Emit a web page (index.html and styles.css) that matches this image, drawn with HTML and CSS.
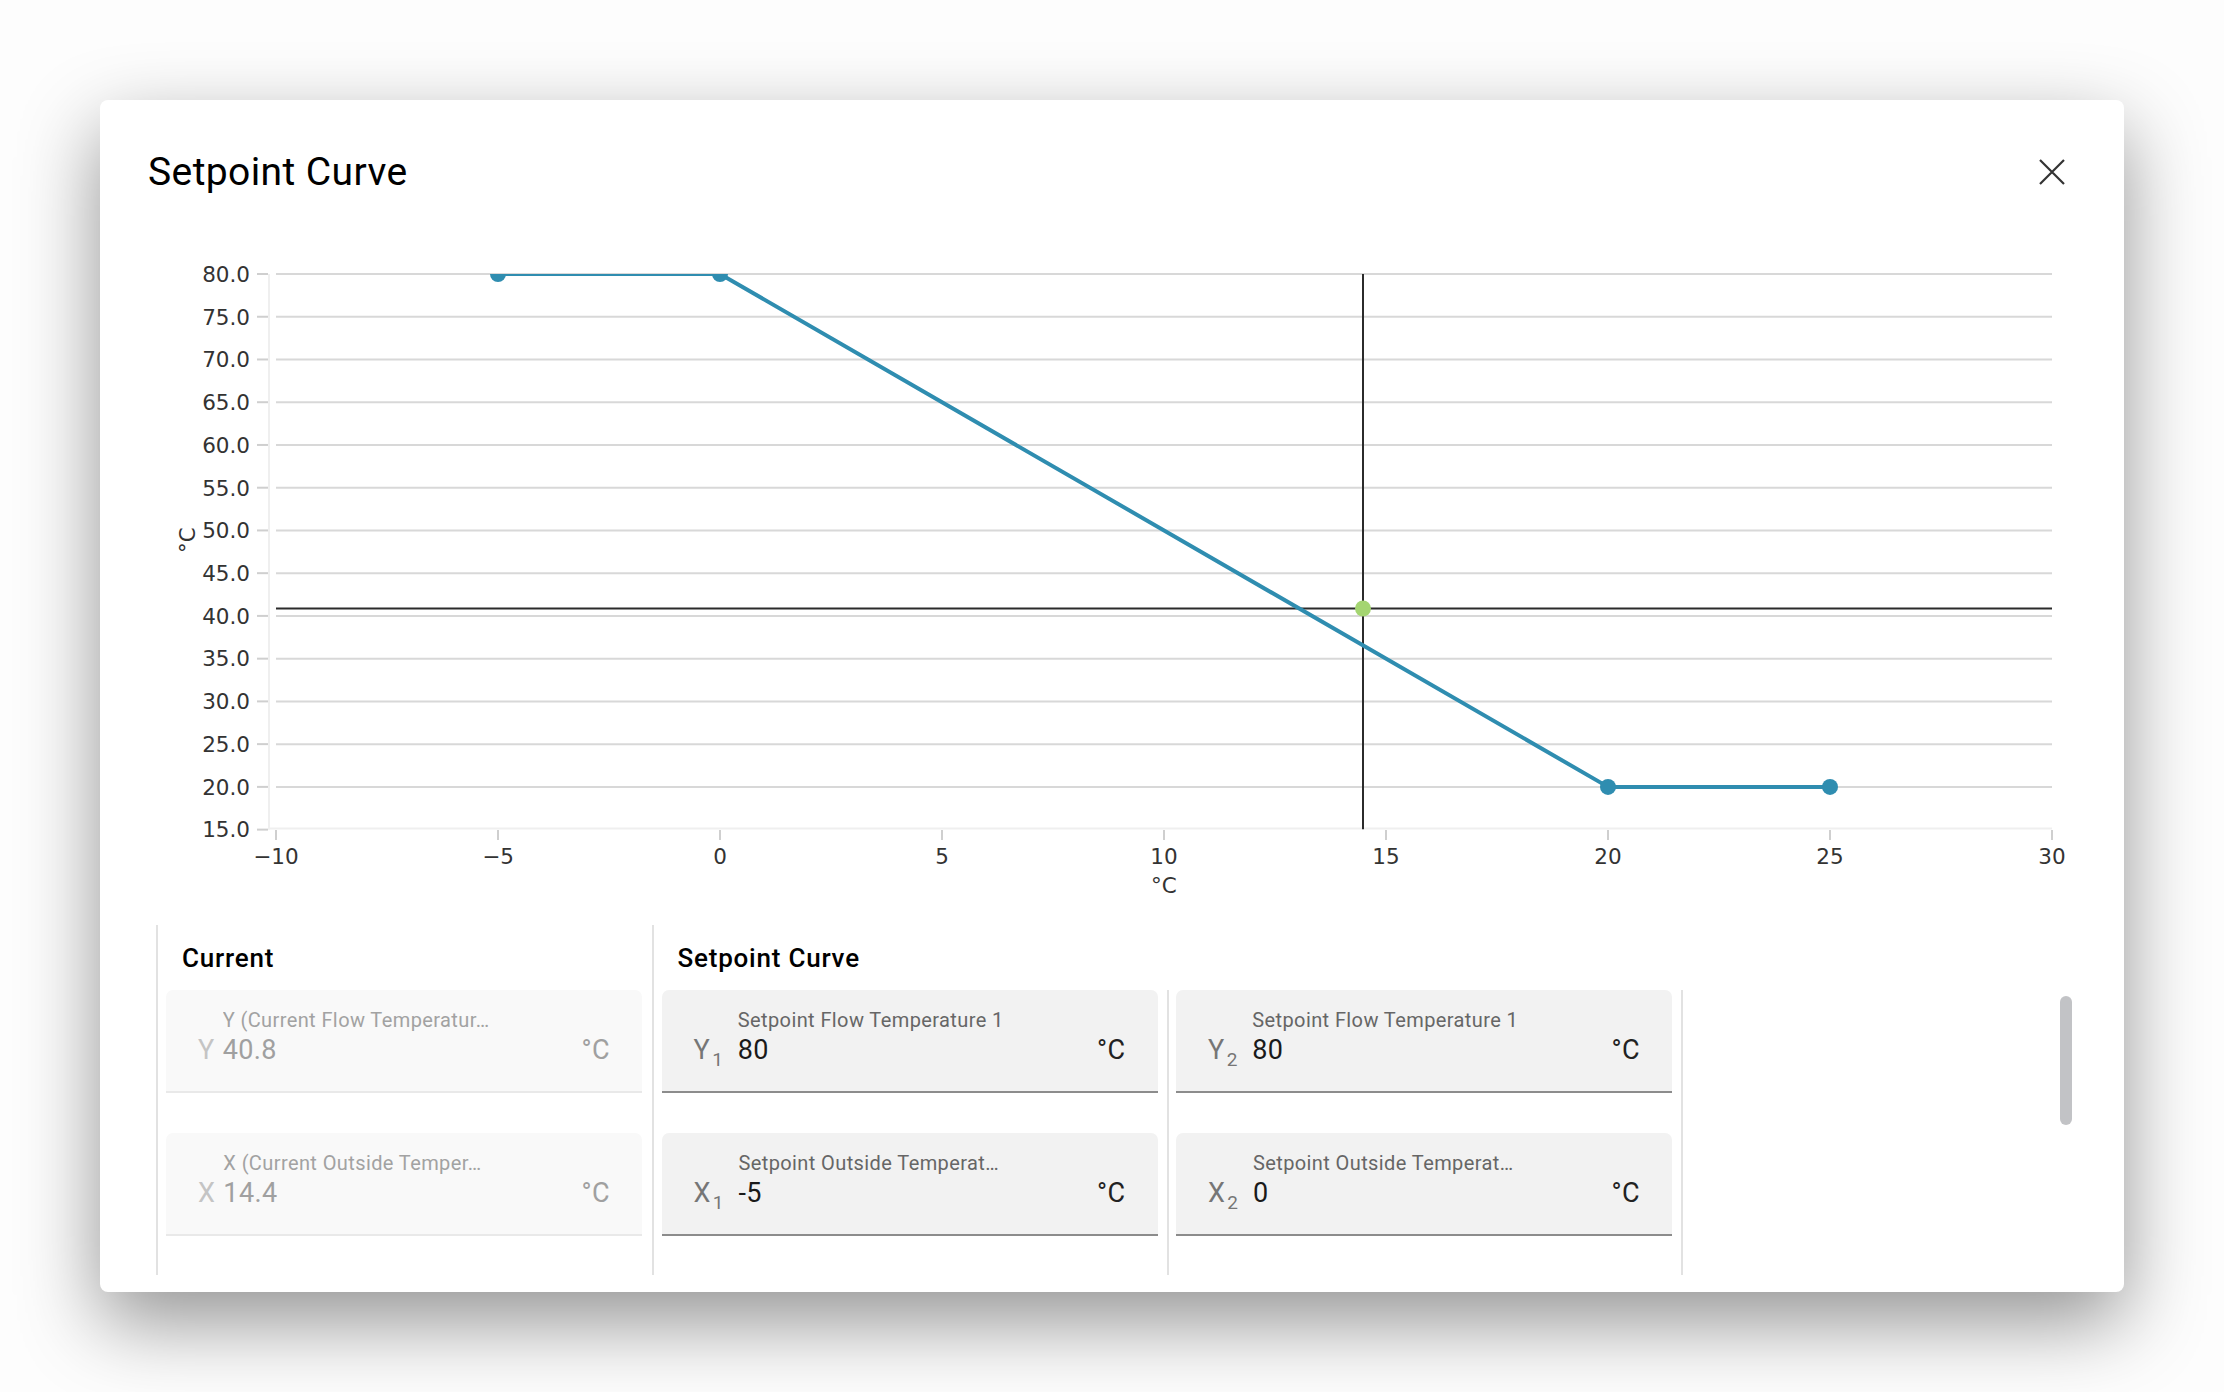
FILE: index.html
```html
<!DOCTYPE html>
<html lang="en">
<head>
<meta charset="utf-8">
<title>Setpoint Curve</title>
<link rel="stylesheet" href="styles.css">
</head>
<body>
<div class="dialog" role="dialog" aria-labelledby="dlg-title">
  <header class="dialog-header">
    <h2 class="dialog-title" id="dlg-title">Setpoint Curve</h2>
    <span class="close-btn" aria-label="Close">
      <svg viewBox="0 0 26 26" width="26" height="26"><path d="M1 1 L25 25 M25 1 L1 25" class="close-icon"/></svg>
    </span>
  </header>

  <svg class="chart" width="1928" height="660" viewBox="0 0 1928 660">
    <defs>
      <clipPath id="plot-area"><rect x="128" y="34" width="1776" height="555.6"/></clipPath>
    </defs>

    <!-- horizontal grid -->
    <g class="grid">
      <line x1="128" x2="1904" y1="34" y2="34"/>
      <line x1="128" x2="1904" y1="76.74" y2="76.74"/>
      <line x1="128" x2="1904" y1="119.48" y2="119.48"/>
      <line x1="128" x2="1904" y1="162.22" y2="162.22"/>
      <line x1="128" x2="1904" y1="204.96" y2="204.96"/>
      <line x1="128" x2="1904" y1="247.7" y2="247.7"/>
      <line x1="128" x2="1904" y1="290.44" y2="290.44"/>
      <line x1="128" x2="1904" y1="333.18" y2="333.18"/>
      <line x1="128" x2="1904" y1="375.92" y2="375.92"/>
      <line x1="128" x2="1904" y1="418.66" y2="418.66"/>
      <line x1="128" x2="1904" y1="461.4" y2="461.4"/>
      <line x1="128" x2="1904" y1="504.14" y2="504.14"/>
      <line x1="128" x2="1904" y1="546.88" y2="546.88"/>
    </g>

    <!-- axes -->
    <g class="axis-line">
      <line x1="121" x2="121" y1="34" y2="589.6"/>
      <line x1="120" x2="1904" y1="588.6" y2="588.6"/>
    </g>

    <!-- y axis -->
    <g class="ticks">
      <line x1="109" x2="120" y1="34" y2="34"/>
      <line x1="109" x2="120" y1="76.74" y2="76.74"/>
      <line x1="109" x2="120" y1="119.48" y2="119.48"/>
      <line x1="109" x2="120" y1="162.22" y2="162.22"/>
      <line x1="109" x2="120" y1="204.96" y2="204.96"/>
      <line x1="109" x2="120" y1="247.7" y2="247.7"/>
      <line x1="109" x2="120" y1="290.44" y2="290.44"/>
      <line x1="109" x2="120" y1="333.18" y2="333.18"/>
      <line x1="109" x2="120" y1="375.92" y2="375.92"/>
      <line x1="109" x2="120" y1="418.66" y2="418.66"/>
      <line x1="109" x2="120" y1="461.4" y2="461.4"/>
      <line x1="109" x2="120" y1="504.14" y2="504.14"/>
      <line x1="109" x2="120" y1="546.88" y2="546.88"/>
      <line x1="109" x2="120" y1="589.62" y2="589.62"/>
    </g>
    <g class="tick-label y-labels">
      <text x="102" y="41.8">80.0</text>
      <text x="102" y="84.54">75.0</text>
      <text x="102" y="127.28">70.0</text>
      <text x="102" y="170.02">65.0</text>
      <text x="102" y="212.76">60.0</text>
      <text x="102" y="255.5">55.0</text>
      <text x="102" y="298.24">50.0</text>
      <text x="102" y="340.98">45.0</text>
      <text x="102" y="383.72">40.0</text>
      <text x="102" y="426.46">35.0</text>
      <text x="102" y="469.2">30.0</text>
      <text x="102" y="511.94">25.0</text>
      <text x="102" y="554.68">20.0</text>
      <text x="102" y="597.42">15.0</text>
    </g>
    <text class="tick-label unit" transform="translate(47 300) rotate(-90)">°C</text>

    <!-- x axis -->
    <g class="ticks">
      <line x1="128" x2="128" y1="590" y2="600"/>
      <line x1="350" x2="350" y1="590" y2="600"/>
      <line x1="572" x2="572" y1="590" y2="600"/>
      <line x1="794" x2="794" y1="590" y2="600"/>
      <line x1="1016" x2="1016" y1="590" y2="600"/>
      <line x1="1238" x2="1238" y1="590" y2="600"/>
      <line x1="1460" x2="1460" y1="590" y2="600"/>
      <line x1="1682" x2="1682" y1="590" y2="600"/>
      <line x1="1904" x2="1904" y1="590" y2="600"/>
    </g>
    <g class="tick-label x-labels">
      <text x="128" y="624">−10</text>
      <text x="350" y="624">−5</text>
      <text x="572" y="624">0</text>
      <text x="794" y="624">5</text>
      <text x="1016" y="624">10</text>
      <text x="1238" y="624">15</text>
      <text x="1460" y="624">20</text>
      <text x="1682" y="624">25</text>
      <text x="1904" y="624">30</text>
    </g>
    <text class="tick-label x-labels" x="1016" y="653">°C</text>

    <g clip-path="url(#plot-area)">
      <!-- current operating point crosshair -->
      <line class="crosshair" x1="128" x2="1904" y1="368.5" y2="368.5"/>
      <line class="crosshair" x1="1215" x2="1215" y1="34" y2="589.6"/>

      <!-- setpoint curve -->
      <polyline class="curve" points="350,34 572,34 1460,546.88 1682,546.88"/>
      <circle class="curve-point" cx="350" cy="34" r="8"/>
      <circle class="curve-point" cx="572" cy="34" r="8"/>
      <circle class="curve-point" cx="1460" cy="546.88" r="8"/>
      <circle class="curve-point" cx="1682" cy="546.88" r="8"/>

      <circle class="current-point" cx="1215" cy="368.5" r="8"/>
    </g>
  </svg>

  <section class="params">
    <div class="col col-current">
      <h3 class="col-title">Current</h3>
      <div class="field-stack">
        <div class="field field-disabled">
          <span class="prefix">Y</span>
          <div class="field-body">
            <span class="field-label">Y (Current Flow Temperatur…</span>
            <span class="field-value">40.8</span>
          </div>
          <span class="suffix">°C</span>
        </div>
        <div class="field field-disabled">
          <span class="prefix">X</span>
          <div class="field-body">
            <span class="field-label">X (Current Outside Temper…</span>
            <span class="field-value">14.4</span>
          </div>
          <span class="suffix">°C</span>
        </div>
      </div>
    </div>

    <div class="group">
      <h3 class="col-title">Setpoint Curve</h3>
      <div class="group-cols">
        <div class="sub-col field-stack">
          <div class="field">
            <span class="prefix">Y<sub>1</sub></span>
            <div class="field-body">
              <span class="field-label">Setpoint Flow Temperature 1</span>
              <span class="field-value">80</span>
            </div>
            <span class="suffix">°C</span>
          </div>
          <div class="field">
            <span class="prefix">X<sub>1</sub></span>
            <div class="field-body">
              <span class="field-label">Setpoint Outside Temperat…</span>
              <span class="field-value">-5</span>
            </div>
            <span class="suffix">°C</span>
          </div>
        </div>
        <div class="sub-col field-stack">
          <div class="field">
            <span class="prefix">Y<sub>2</sub></span>
            <div class="field-body">
              <span class="field-label">Setpoint Flow Temperature 1</span>
              <span class="field-value">80</span>
            </div>
            <span class="suffix">°C</span>
          </div>
          <div class="field">
            <span class="prefix">X<sub>2</sub></span>
            <div class="field-body">
              <span class="field-label">Setpoint Outside Temperat…</span>
              <span class="field-value">0</span>
            </div>
            <span class="suffix">°C</span>
          </div>
        </div>
      </div>
    </div>
  </section>

  <div class="scroll-thumb"></div>
</div>
</body>
</html>
```

FILE: styles.css
```css
html, body {
  margin: 0;
}

body {
  padding: 100px;
  background: #fdfdfd;
  font-family: Roboto, "Noto Sans", sans-serif;
  letter-spacing: 0.025em;
  color: #000;
}

/* dialog shell */
.dialog {
  position: relative;
  height: 1192px;
  box-sizing: border-box;
  padding: 48px 48px 0;
  background: #fff;
  border-radius: 8px;
  box-shadow: 0 30px 80px rgba(0, 0, 0, 0.42);
}

.dialog-header {
  display: flex;
  align-items: center;
  justify-content: space-between;
  height: 48px;
}

.dialog-title {
  margin: 0;
  font-size: 39px;
  font-weight: 400;
  line-height: 42px;
}

.close-btn {
  width: 48px;
  height: 48px;
  display: flex;
  align-items: center;
  justify-content: center;
}

.close-icon {
  fill: none;
  stroke: #333;
  stroke-width: 2.2;
}

/* chart */
.chart {
  display: block;
  margin-top: 44px;
  letter-spacing: 0;
}

.grid line {
  stroke: #d8d8d8;
  stroke-width: 2;
}

.axis-line line {
  stroke: #efefef;
  stroke-width: 2;
}

.ticks line {
  stroke: #cfcfcf;
  stroke-width: 2;
}

.tick-label {
  font-family: "DejaVu Sans", sans-serif;
  font-size: 21.5px;
  fill: #333;
}

.y-labels {
  text-anchor: end;
}

.x-labels,
.unit {
  text-anchor: middle;
}

.crosshair {
  stroke: #2b2b2b;
  stroke-width: 2;
}

.curve {
  fill: none;
  stroke: #2f8db0;
  stroke-width: 4;
  stroke-linejoin: round;
}

.curve-point {
  fill: #2f8db0;
}

.current-point {
  fill: #a4d571;
}

/* parameter columns */
.params {
  display: flex;
  height: 350px;
  margin: 25px 0 0 8px;
}

.col-title {
  margin: 0;
  padding: 18px 0 17px 16px;
  font-size: 26px;
  font-weight: 500;
  line-height: 30px;
  letter-spacing: 0.03em;
}

.col-current {
  width: 496px;
  box-sizing: border-box;
  padding: 0 10px 0 8px;
  border-left: 2px solid #e2e2e2;
}

.group {
  border-left: 2px solid #e2e2e2;
}

.group .col-title {
  padding-left: 23.5px;
}

.group-cols {
  display: flex;
}

.field-stack {
  display: flex;
  flex-direction: column;
  gap: 40px;
}

.sub-col {
  width: 514.5px;
  box-sizing: border-box;
  padding: 0 9px 39px 7.5px;
  border-right: 2px solid #e2e2e2;
}

/* filled text field */
.field {
  display: flex;
  align-items: flex-end;
  height: 103px;
  box-sizing: border-box;
  padding: 18px 32px 25px;
  background: #f2f2f2;
  border-bottom: 2px solid #8c8c8c;
  border-radius: 7px 7px 0 0;
}

.prefix {
  font-size: 27px;
  line-height: 32px;
  color: #767676;
  margin-right: 8px;
  white-space: nowrap;
}

.prefix sub {
  font-size: 19px;
  line-height: 0;
  vertical-align: -7px;
  margin-left: 2px;
  margin-right: 6.5px;
}

.field-body {
  flex: 1;
  min-width: 0;
  display: flex;
  flex-direction: column;
}

.field-label {
  font-size: 20px;
  line-height: 24px;
  margin-bottom: 2px;
  color: #666;
  white-space: nowrap;
  overflow: hidden;
  text-overflow: ellipsis;
}

.field-value {
  font-size: 27px;
  line-height: 32px;
  color: #1a1a1a;
}

.suffix {
  font-size: 27px;
  line-height: 32px;
  color: #222;
}

.field-disabled {
  background: #f9f9f9;
  border-bottom-color: #e9e9e9;
}

.field-disabled .prefix {
  color: #c4c4c4;
}

.field-disabled .field-label {
  color: #a2a2a2;
}

.field-disabled .field-value,
.field-disabled .suffix {
  color: #a0a0a0;
}

/* overlay scrollbar of the parameter area */
.scroll-thumb {
  position: absolute;
  left: 1960px;
  top: 896px;
  width: 12px;
  height: 129px;
  border-radius: 6px;
  background: #c2c3c6;
}
```
